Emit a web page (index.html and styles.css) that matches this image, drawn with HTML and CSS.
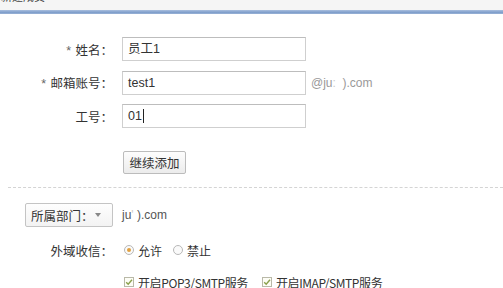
FILE: index.html
```html
<!DOCTYPE html>
<html>
<head>
<meta charset="utf-8">
<link rel="stylesheet" href="styles.css">
</head>
<body>
<div class="topbar"><span class="title">新建成员</span></div>
<div class="blueline"></div>
<div class="form">
  <div class="row">
    <label class="lbl"><span class="req">*</span> 姓名：</label>
    <div class="input">员工1</div>
  </div>
  <div class="row">
    <label class="lbl"><span class="req">*</span> 邮箱账号：</label>
    <div class="input">test1</div>
    <span class="domain">@ju<span class="blur">:</span>&nbsp;&nbsp;).com</span>
  </div>
  <div class="row">
    <label class="lbl">工号：</label>
    <div class="input">01<span class="caret"></span></div>
  </div>
  <div class="row btnrow">
    <span class="lbl"></span>
    <button class="btn">继续添加</button>
  </div>
</div>
<div class="dash"></div>
<div class="form2">
  <div class="row deptrow">
    <div class="select">所属部门：<span class="arrow"></span></div>
    <span class="dept">ju<span class="blur">'</span>&nbsp;).com</span>
  </div>
  <div class="row optrow">
    <label class="lbl">外域收信：</label>
    <span class="opt"><span class="radio on"></span>允许</span>
    <span class="opt"><span class="radio"></span>禁止</span>
  </div>
  <div class="row optrow chk">
    <span class="lbl"></span>
    <span class="opt cbopt"><svg class="cb" width="10" height="10" viewBox="0 0 10 10"><rect x="0.5" y="0.5" width="9" height="9" fill="#fdfdf6" stroke="#b9b9a8"/><path d="M2.2 5.2 L4.2 7.2 L8 2.8" fill="none" stroke="#8aa04a" stroke-width="1.4"/></svg>开启POP3/SMTP服务</span>
    <span class="opt cbopt"><svg class="cb" width="10" height="10" viewBox="0 0 10 10"><rect x="0.5" y="0.5" width="9" height="9" fill="#fdfdf6" stroke="#b9b9a8"/><path d="M2.2 5.2 L4.2 7.2 L8 2.8" fill="none" stroke="#8aa04a" stroke-width="1.4"/></svg>开启IMAP/SMTP服务</span>
  </div>
</div>
</body>
</html>
```
FILE: styles.css
```css
html, body {
  margin: 0;
  padding: 0;
  background: #fff;
  font-family: "Liberation Sans", "Noto Sans CJK SC", sans-serif;
  font-size: 12px;
  color: #333;
  overflow: hidden;
}
.topbar {
  height: 10px;
  background: #f5f5f5;
  overflow: hidden;
}
.title {
  display: block;
  font-size: 11px;
  line-height: 11px;
  margin-top: -8px;
  padding-left: 1px;
  color: #444;
}
.blueline {
  height: 4px;
  background: linear-gradient(#a9bfdf, #7f9ecb 60%, #9bb3d6);
}
.form {
  display: flex;
  flex-direction: column;
  gap: 9.5px;
  padding-top: 23px;
}
.row {
  display: flex;
  align-items: center;
}
.lbl {
  width: 113px;
  flex: none;
  text-align: right;
  margin-right: 9px;
  color: #333;
  font-size: 12.5px;
}
.req {
  color: #666;
  margin-right: 1px;
}
.input {
  box-sizing: border-box;
  width: 184px;
  height: 24px;
  border: 1px solid #cfcfcf;
  border-top-color: #bdbdbd;
  padding: 0 5px;
  line-height: 22px;
  font-size: 12.5px;
  color: #333;
  background: #fff;
  display: flex;
  align-items: center;
}
.caret {
  display: inline-block;
  width: 1px;
  height: 14px;
  background: #222;
  margin-left: 1px;
}
.domain {
  margin-left: 5px;
  color: #999;
  font-size: 12px;
}
.blur {
  color: #ccc;
}
.btnrow {
  margin-top: 13.5px;
}
.btn {
  box-sizing: border-box;
  width: 63px;
  height: 23px;
  margin-left: 1px;
  padding: 0;
  border: 1px solid #bcbcbc;
  border-radius: 2px;
  background: linear-gradient(#fdfdfd, #ececec);
  font-family: "Liberation Sans", "Noto Sans CJK SC", sans-serif;
  font-size: 12.5px;
  color: #333;
}
.dash {
  margin: 13px 0 0 8px;
  border-top: 1px dashed #d4d4d4;
  height: 0;
}
.form2 {
  padding-top: 15px;
}
.select {
  box-sizing: border-box;
  width: 88px;
  height: 24px;
  margin-left: 25px;
  border: 1px solid #c4c4c4;
  border-radius: 2px;
  background: linear-gradient(#fefefe, #f3f3f3);
  padding-left: 5px;
  display: flex;
  align-items: center;
  font-size: 12.5px;
  color: #333;
}
.arrow {
  width: 0;
  height: 0;
  margin-left: 1px;
  border-left: 3.5px solid transparent;
  border-right: 3.5px solid transparent;
  border-top: 4px solid #888;
}
.dept {
  margin-left: 9px;
  color: #555;
  font-size: 12px;
}
.optrow {
  margin-top: 13px;
  height: 20px;
}
.chk {
  margin-top: 12px;
}
.opt {
  display: flex;
  align-items: center;
  margin-right: 9px;
  font-size: 12px;
  color: #333;
}
.cbopt {
  font-family: "Noto Sans CJK SC", sans-serif;
  letter-spacing: -0.4px;
  margin-right: 12px;
}
.radio {
  box-sizing: border-box;
  width: 10px;
  height: 10px;
  border-radius: 50%;
  border: 1px solid #b8b8b8;
  background: #fafafa;
  margin: 0 4px 0 2px;
  position: relative;
}
.radio.on::after {
  content: "";
  position: absolute;
  left: 2px;
  top: 2px;
  width: 4px;
  height: 4px;
  border-radius: 50%;
  background: #e0a040;
}
.cb {
  margin: 0 4px 0 2px;
  flex: none;
}
```
